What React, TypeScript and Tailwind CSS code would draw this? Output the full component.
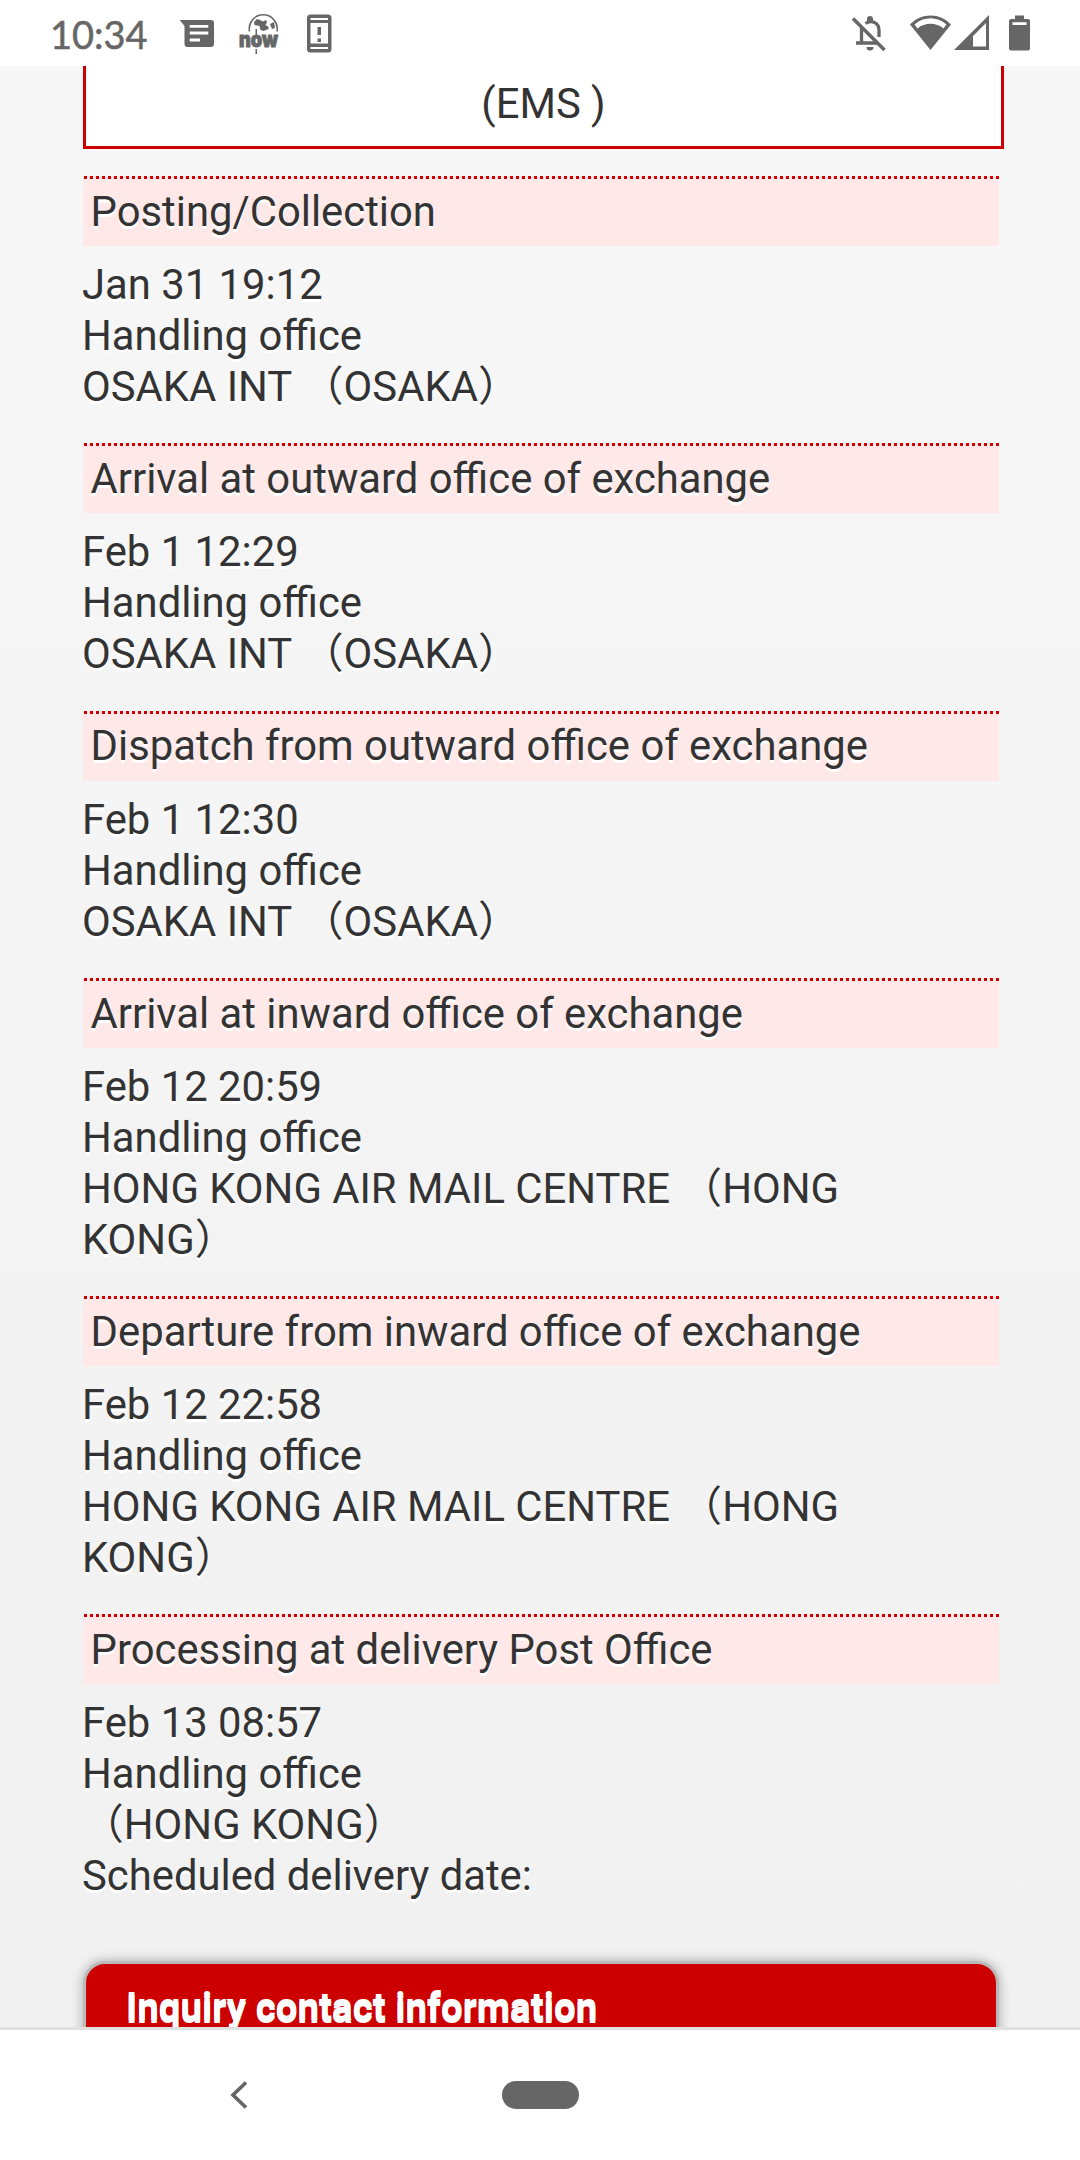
type Entry = {
  title: string;
  lines: string[];
};

const entries: Entry[] = [
  {
    title: "Posting/Collection",
    lines: ["Jan 31 19:12", "Handling office", "OSAKA INT （OSAKA）"],
  },
  {
    title: "Arrival at outward office of exchange",
    lines: ["Feb 1 12:29", "Handling office", "OSAKA INT （OSAKA）"],
  },
  {
    title: "Dispatch from outward office of exchange",
    lines: ["Feb 1 12:30", "Handling office", "OSAKA INT （OSAKA）"],
  },
  {
    title: "Arrival at inward office of exchange",
    lines: ["Feb 12 20:59", "Handling office", "HONG KONG AIR MAIL CENTRE （HONG", "KONG）"],
  },
  {
    title: "Departure from inward office of exchange",
    lines: ["Feb 12 22:58", "Handling office", "HONG KONG AIR MAIL CENTRE （HONG", "KONG）"],
  },
  {
    title: "Processing at delivery Post Office",
    lines: ["Feb 13 08:57", "Handling office", "（HONG KONG）", "Scheduled delivery date:"],
  },
];

function MessageIcon() {
  return (
    <svg width="36" height="66" viewBox="181 0 36 66" fill="#666">
      <path
        fillRule="evenodd"
        d="M180.500 20H212a3 3 0 0 1 3 3V44a3 3 0 0 1-3 3H188.500a3 3 0 0 1-3-3V26ZM190.700 25V27.700H209.300V25ZM190.700 31.600V34.400H209.300V31.600ZM190.700 38.600V41.400H201V38.600Z"
      />
    </svg>
  );
}

function NowIcon() {
  return (
    <svg width="42" height="66" viewBox="238 0 42 66" fill="#666" className="overflow-visible">
      <path d="M249.500 31.500a14 14 0 1 1 27.500 0" fill="none" stroke="#666" strokeWidth="1.500" />
      <path d="M254 22l3-3 3 1 3 1.500 3-1.500 1 2-1.500 3 3 2 0 2-5 2-3-1-1-4-5-1ZM270 24l4-2 1 6-3 1Z" />
      <path d="M255.500 29h1.500v6h-1.500zM255.500 49h1.500v5h-1.500z" />
      <text
        x="239"
        y="47"
        textLength="39"
        lengthAdjust="spacingAndGlyphs"
        stroke="#666"
        strokeWidth="0.900"
        className="font-['Inter',sans-serif] text-[21px] font-black"
      >
        now
      </text>
    </svg>
  );
}

function PhoneAlertIcon() {
  return (
    <svg width="26" height="66" viewBox="306 0 26 66" fill="#666">
      <path
        fillRule="evenodd"
        d="M310.500 14.500H328a3.500 3.500 0 0 1 3.500 3.500V49a3.500 3.500 0 0 1-3.500 3.500H310.500A3.500 3.500 0 0 1 307 49V18a3.500 3.500 0 0 1 3.500-3.500ZM310.500 18V20H328V18ZM310.500 23V43.500H328V23ZM310.500 47V49H328V47Z"
      />
      <path d="M317.500 27h3.500v8h-3.500zM317.500 38.500h3.500v3.500h-3.500z" />
    </svg>
  );
}

function BellOffIcon() {
  return (
    <svg width="36" height="66" viewBox="851 0 36 66" fill="none" stroke="#666">
      <path d="M861.500 28V43M856 43H877M865.500 23.500C872 19 879 23.500 879 30V37" strokeWidth="3.300" />
      <path d="M853 18.500L884.500 50" strokeWidth="3.500" />
      <path d="M867 21V19a3 3 0 0 1 6 0V21ZM866.500 47h7a3.500 3.500 0 0 1-7 0Z" fill="#666" stroke="none" />
    </svg>
  );
}

function WifiIcon() {
  return (
    <svg width="42" height="66" viewBox="910 0 42 66" fill="#666">
      <path
        fillRule="evenodd"
        d="M930.500 50L910 24.500C921 12.500 940 12.500 951 24.500ZM914.500 24.500L917.500 28.500C925 22.300 936 22.300 943.500 28.500L946.500 24.500C937 16.300 924 16.300 914.500 24.500Z"
      />
    </svg>
  );
}

function SignalIcon() {
  return (
    <svg width="36" height="66" viewBox="954 0 36 66" fill="#666">
      <path fillRule="evenodd" d="M954 50L989 15V50ZM973 36V46.500H986V23Z" />
    </svg>
  );
}

function BatteryIcon() {
  return (
    <svg width="22" height="66" viewBox="1009 0 22 66" fill="#666">
      <path
        fillRule="evenodd"
        d="M1015 15.500H1024V19H1028a2 2 0 0 1 2 2V48.500a2 2 0 0 1-2 2H1011a2 2 0 0 1-2-2V21a2 2 0 0 1 2-2H1015ZM1012.500 22.300V25H1026.500V22.300Z"
      />
    </svg>
  );
}

function StatusBar() {
  return (
    <header className="flex h-[66px] shrink-0 justify-between bg-white pr-[49px] pl-[50px] text-[#666]">
      <div className="flex">
        <span className="w-[130px] font-['Lato',sans-serif] text-[38px] leading-[69px] [-webkit-text-stroke:0.500px_#666]">
          10:34
        </span>
        <MessageIcon />
        <div className="w-[22px]" />
        <NowIcon />
        <div className="w-[26px]" />
        <PhoneAlertIcon />
      </div>
      <div className="flex">
        <BellOffIcon />
        <div className="w-[23px]" />
        <WifiIcon />
        <div className="w-[2px]" />
        <SignalIcon />
        <div className="w-[19px]" />
        <BatteryIcon />
      </div>
    </header>
  );
}

function TrackingEntry({ title, lines }: Entry) {
  return (
    <section className="pb-[31.3px]">
      <div className="h-[70px] bg-[#ffe8e8]">
        <div className="ml-px h-[3px] bg-[repeating-linear-gradient(90deg,#c00_0_3px,transparent_3px_6px)]" />
        <h2 className="pt-[6.800px] pl-[7.600px]">{title}</h2>
      </div>
      <div className="-ml-px pt-[13px]">
        {lines.map((line, idx) => (
          <p key={idx}>{line}</p>
        ))}
      </div>
    </section>
  );
}

export default function App() {
  return (
    <div className="flex h-[2160px] w-[1080px] flex-col overflow-hidden bg-white font-['Roboto','Noto_Sans_CJK_JP',sans-serif]">
      <StatusBar />
      <main className="min-h-0 flex-1 overflow-hidden bg-linear-to-b from-[#f7f7f7] to-[#f1f1f1] pr-[76px] pl-[83px] text-[41.8px] leading-[51px] whitespace-pre text-[#333]">
        <div className="h-[83px] border-[3px] border-t-0 border-[#c00] bg-white pt-[11.500px] text-center">
          (EMS )
        </div>
        <div className="mr-[5px] pt-[27px] [text-shadow:0_3px_0_#fff]">
          {entries.map((entry) => (
            <TrackingEntry key={entry.title} {...entry} />
          ))}
        </div>
        <div className="mt-[28.500px] mr-[5px] h-[140px] rounded-[22px] border-[3px] border-[#bbb] bg-[#c00] pt-[17px] pl-[40px] text-[38.500px] font-bold text-white shadow-[0_0_12px_rgba(0,0,0,0.3)] [text-shadow:0_3px_0_#fff]">
          Inquiry contact information
        </div>
      </main>
      <nav className="flex h-[133px] shrink-0 items-center border-t-[3px] border-[#e0e0e0] bg-white pl-[230px]">
        <svg width="18" height="28" viewBox="0 0 18 28" fill="none" stroke="#666" strokeWidth="3.700">
          <path d="M16 1.500L3 14L16 26.500" />
        </svg>
        <div className="ml-[254px] h-7 w-[77px] rounded-full bg-[#666]" />
      </nav>
    </div>
  );
}
